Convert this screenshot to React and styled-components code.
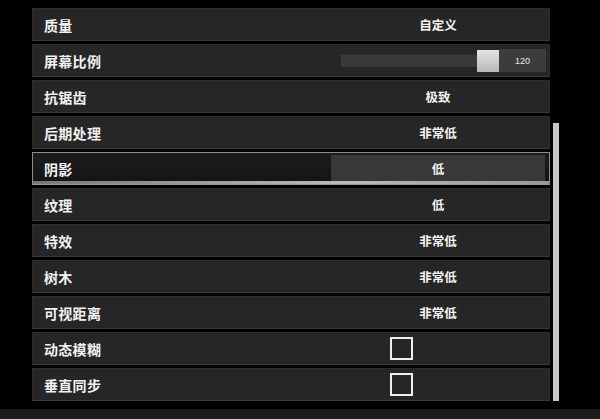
import React from "react";
import styled, { createGlobalStyle } from "styled-components";

const GlobalStyle = createGlobalStyle`
  html, body {
    margin: 0;
    padding: 0;
    background: #000;
  }
  body {
    font-family: "Noto Sans CJK SC", "Noto Sans", sans-serif;
    color: #fff;
  }
`;

const Screen = styled.div`
  width: 600px;
  height: 419px;
  overflow: hidden;
  display: flex;
  flex-direction: column;
  background: #000;
`;

const Body = styled.div`
  display: flex;
  padding: 8px 0 0 32px;
  gap: 3px;
  height: 401px;
  box-sizing: border-box;
`;

const List = styled.div`
  width: 518px;
  display: flex;
  flex-direction: column;
  gap: 3px;
`;

const Row = styled.div`
  position: relative;
  height: 33px;
  box-sizing: border-box;
  display: flex;
  align-items: center;
  background: ${(p) => (p.$active ? "linear-gradient(180deg, #1c1c1c, #141414)" : "#262626")};
  border: 1px solid ${(p) => (p.$active ? "#8c8c8c" : "#2d2d2d")};
  border-bottom-color: ${(p) => (p.$active ? "#9a9a9a" : "#3a3a3a")};
  ${(p) =>
    p.$active &&
    `
    &::after {
      content: "";
      position: absolute;
      left: 0;
      right: 0;
      bottom: 0;
      height: 3px;
      background: linear-gradient(90deg, #777 0%, #aaa 45%, #bbb 60%, #999 100%);
    }
  `}
`;

const Label = styled.div`
  width: 298px;
  box-sizing: border-box;
  padding-left: 11px;
  font-size: 14px;
  font-weight: 700;
  color: #f2f2f2;
  letter-spacing: 0.3px;
`;

const Value = styled.div`
  flex: 1;
  align-self: stretch;
  margin: ${(p) => (p.$active ? "2px 4px 3px 0" : "0 4px 0 0")};
  display: flex;
  align-items: center;
  justify-content: center;
  font-size: 12.5px;
  font-weight: 700;
  color: #f4f4f4;
  background: ${(p) => (p.$active ? "#383838" : "transparent")};
`;

const SliderWrap = styled.div`
  flex: 1;
  display: flex;
  align-items: center;
  padding-left: 10px;
  margin-right: 3px;
`;

const Track = styled.div`
  flex: 1;
  height: 12px;
  background: #3a3a3a;
  border-top: 1px solid #2e2e2e;
`;

const Thumb = styled.div`
  width: 22px;
  height: 22px;
  margin-left: -3px;
  background: linear-gradient(180deg, #e4e4e4, #b8b8b8);
`;

const SliderNum = styled.div`
  width: 47px;
  height: 23px;
  display: flex;
  align-items: center;
  justify-content: center;
  background: #3c3c3c;
  font-family: "Liberation Sans", Arial, sans-serif;
  font-size: 9px;
  color: #e8e8e8;
`;

const CheckCell = styled.div`
  flex: 1;
  display: flex;
  align-items: center;
  padding-left: 59px;
`;

const Checkbox = styled.div`
  width: 23px;
  height: 23px;
  box-sizing: border-box;
  border: 2px solid #f0f0f0;
`;

const ScrollTrack = styled.div`
  width: 6px;
  display: flex;
  flex-direction: column;
`;

const ScrollThumb = styled.div`
  margin-top: 115px;
  flex: 1;
  background: #c6c6c6;
`;

const BottomBar = styled.div`
  margin-top: 8px;
  flex: 1;
  background: #1b1b1b;
`;

const rows = [
  { label: "质量", value: "自定义" },
  { label: "屏幕比例", slider: 120 },
  { label: "抗锯齿", value: "极致" },
  { label: "后期处理", value: "非常低" },
  { label: "阴影", value: "低", active: true },
  { label: "纹理", value: "低" },
  { label: "特效", value: "非常低" },
  { label: "树木", value: "非常低" },
  { label: "可视距离", value: "非常低" },
  { label: "动态模糊", check: true },
  { label: "垂直同步", check: true },
];

export default function App() {
  return (
    <>
      <GlobalStyle />
      <Screen>
        <Body>
          <List>
            {rows.map((r, i) => (
              <Row key={i} $active={r.active}>
                <Label>{r.label}</Label>
                {r.slider && (
                  <SliderWrap>
                    <Track />
                    <Thumb />
                    <SliderNum>{r.slider}</SliderNum>
                  </SliderWrap>
                )}
                {r.check && (
                  <CheckCell>
                    <Checkbox />
                  </CheckCell>
                )}
                {r.value && <Value $active={r.active}>{r.value}</Value>}
              </Row>
            ))}
          </List>
          <ScrollTrack>
            <ScrollThumb />
          </ScrollTrack>
        </Body>
        <BottomBar />
      </Screen>
    </>
  );
}
